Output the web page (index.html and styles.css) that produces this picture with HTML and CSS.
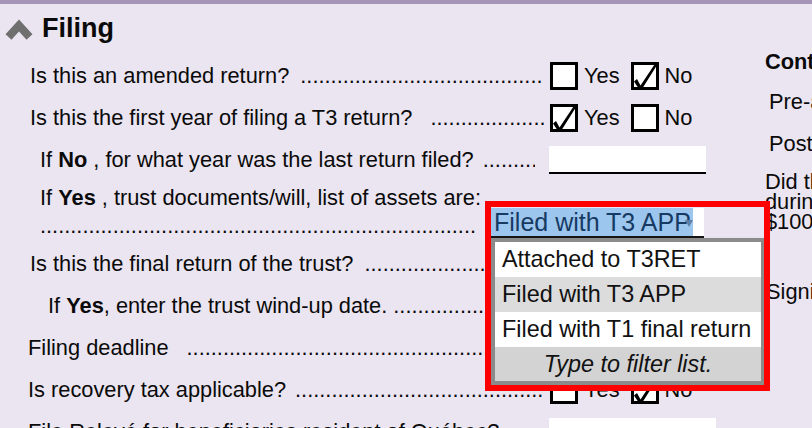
FILE: index.html
```html
<!DOCTYPE html>
<html lang="en">
<head>
<meta charset="utf-8">
<title>Filing</title>
<link rel="stylesheet" href="styles.css">
</head>
<body>
<div class="screen">
  <div class="topbar"></div>
  <div class="page">
    <section class="form">
      <h2 class="section-head">
        <svg class="chev" viewBox="0 0 30 24" width="30" height="24"><polyline points="4.5,21 15,9.5 25.5,21"/></svg>
        <span>Filing</span>
      </h2>

      <div class="row">
        <div class="q"><span class="label">Is this an amended return?</span><span class="lead gap-m"></span></div>
        <div class="ctl">
          <span class="cb"></span><span class="opt">Yes</span>
          <span class="cb"><svg class="tick" viewBox="0 0 28 28"><polygon points="3,19.5 6,17 9.5,23.5 23.5,2.5 25.8,3.5 10.5,27.8 8.5,27.8"/></svg></span><span class="opt">No</span>
        </div>
      </div>

      <div class="row">
        <div class="q"><span class="label">Is this the first year of filing a T3 return?</span><span class="lead gap-l"></span></div>
        <div class="ctl">
          <span class="cb"><svg class="tick" viewBox="0 0 28 28"><polygon points="3,19.5 6,17 9.5,23.5 23.5,2.5 25.8,3.5 10.5,27.8 8.5,27.8"/></svg></span><span class="opt">Yes</span>
          <span class="cb"></span><span class="opt">No</span>
        </div>
      </div>

      <div class="row">
        <div class="q q-sub q-short"><span class="label">If <b>No</b> , for what year was the last return filed?</span><span class="lead gap-s"></span></div>
        <div class="ctl"><span class="field"></span></div>
      </div>

      <div class="row row-tall">
        <div class="q q-sub q-stack">
          <span class="label">If <b>Yes</b> , trust documents/will, list of assets are:</span>
          <span class="lead"></span>
        </div>
        <div class="ctl"></div>
      </div>

      <div class="row">
        <div class="q"><span class="label">Is this the final return of the trust?</span><span class="lead gap-m"></span></div>
        <div class="ctl">
          <span class="cb"></span><span class="opt">Yes</span>
          <span class="cb"></span><span class="opt">No</span>
        </div>
      </div>

      <div class="row">
        <div class="q q-subsub"><span class="label">If <b>Yes</b>, enter the trust wind-up date.</span><span class="lead gap-xs"></span></div>
        <div class="ctl"><span class="field"></span></div>
      </div>

      <div class="row">
        <div class="q q-flush"><span class="label">Filing deadline</span><span class="lead gap-l"></span></div>
        <div class="ctl"><span class="field"></span></div>
      </div>

      <div class="row">
        <div class="q q-flush"><span class="label">Is recovery tax applicable?</span><span class="lead gap-s"></span></div>
        <div class="ctl">
          <span class="cb"></span><span class="opt">Yes</span>
          <span class="cb"><svg class="tick" viewBox="0 0 28 28"><polygon points="3,19.5 6,17 9.5,23.5 23.5,2.5 25.8,3.5 10.5,27.8 8.5,27.8"/></svg></span><span class="opt">No</span>
        </div>
      </div>

      <div class="row">
        <div class="q q-flush"><span class="label">File Relevé for beneficiaries resident of Québec?</span></div>
        <div class="ctl"><span class="field field-wide"></span></div>
      </div>
    </section>

    <aside class="side">
      <div class="side-title">Contact person</div>
      <div class="side-item">Pre-assessment review</div>
      <div class="side-item side-item-2">Post-assessment review</div>
      <div class="side-para">Did the trust hold foreign property<br>during the year with a total cost of more than<br>$100,000?</div>
      <div class="side-item side-sign">Signing authority</div>
    </aside>
  </div>

  <div class="dropdown">
    <div class="dd-field">
      <span class="dd-value">Filed with T3 APP</span>
      <span class="dd-arrow"></span>
    </div>
    <ul class="dd-list">
      <li class="dd-item">Attached to T3RET</li>
      <li class="dd-item dd-item-active">Filed with T3 APP</li>
      <li class="dd-item">Filed with T1 final return</li>
      <li class="dd-item dd-hint">Type to filter list.</li>
    </ul>
  </div>
  <div class="highlight"></div>
</div>
</body>
</html>
```

FILE: styles.css
```css
* { box-sizing: border-box; }

html, body {
  margin: 0;
  padding: 0;
}

body {
  width: 812px;
  height: 428px;
  overflow: hidden;
  background: #eae5f0;
  font-family: "Liberation Sans", Arial, sans-serif;
  font-size: 21.8px;
  color: #0a0a0a;
}

.screen {
  position: relative;
  width: 812px;
  height: 428px;
  overflow: hidden;
}

.topbar {
  height: 4px;
  background: #a795b9;
}

.page {
  display: flex;
}

.form {
  flex: 0 0 765px;
}

.section-head {
  display: flex;
  align-items: center;
  height: 51px;
  margin: 0;
  padding: 0 0 3px 4px;
  font-size: 27px;
  font-weight: bold;
}

.chev {
  margin-right: 8px;
  flex: none;
}

.chev polyline {
  fill: none;
  stroke: #6f6f6f;
  stroke-width: 8;
}

.row {
  display: grid;
  grid-template-columns: 544px 221px;
  align-items: center;
  height: 42px;
}

.row-tall {
  height: 62px;
  align-items: start;
  padding-top: 3px;
}

.q {
  display: flex;
  padding-left: 30px;
  line-height: 28px;
  white-space: nowrap;
  overflow: hidden;
}

.q-sub { padding-left: 40px; }
.q-subsub { padding-left: 48px; }
.q-flush { padding-left: 28px; }
.q-short { padding-right: 9px; }

.q-stack {
  flex-direction: column;
  padding-right: 69px;
  overflow: visible;
}

.label { flex: none; }

.lead {
  flex: 1;
  min-width: 0;
  overflow: hidden;
}

.lead::after {
  content: "....................................................................................................";
}

.gap-xs { margin-left: 6px; }
.gap-s { margin-left: 9px; }
.gap-m { margin-left: 11px; }
.gap-l { margin-left: 18px; }

.ctl {
  display: flex;
  align-items: center;
  padding-left: 6px;
  height: 28px;
}

.cb {
  position: relative;
  flex: none;
  width: 28px;
  height: 28px;
  border: 3px solid #000;
  background: #fff;
}

.tick {
  position: absolute;
  left: -3px;
  top: -3px;
  width: 28px;
  height: 28px;
  fill: #000;
}

.opt {
  margin-left: 6px;
  margin-right: 11px;
  line-height: 28px;
}

.cb + .opt + .cb + .opt { margin-right: 0; }

.field {
  display: block;
  width: 157px;
  height: 28px;
  margin-left: -1px;
  background: #fff;
  border-bottom: 2px solid #000;
}

.field-wide {
  width: 167px;
  border-bottom: none;
}

/* right column */
.side {
  flex: 0 0 320px;
  white-space: nowrap;
  line-height: 28px;
}

.side-title {
  margin-top: 44px;
  font-weight: bold;
}

.side-item {
  margin-top: 12px;
  padding-left: 4px;
}

.side-item-2 { margin-top: 14px; }

.side-para {
  margin-top: 14px;
  line-height: 20px;
}

.side-sign { margin-top: 46px; padding-left: 1px; }

/* open dropdown */
.dropdown {
  position: absolute;
  left: 491px;
  top: 208px;
  width: 274px;
}

.dd-field {
  position: relative;
  width: 213px;
  height: 30px;
  background: #fff;
  border-bottom: 2px solid #151515;
}

.dd-value {
  display: block;
  width: 202px;
  height: 28px;
  padding-left: 3px;
  background: #9dc6ee;
  color: #173a63;
  font-size: 25px;
  line-height: 28px;
  white-space: nowrap;
  overflow: hidden;
}

.dd-arrow {
  position: absolute;
  left: 194px;
  top: 12px;
  width: 0;
  height: 0;
  border-left: 4px solid transparent;
  border-right: 4px solid transparent;
  border-top: 7px solid #5f80a8;
}

.dd-list {
  list-style: none;
  margin: 0;
  padding: 0;
  width: 274px;
  border: 4px solid #8b8b8b;
  box-shadow: 2px 2px 3px rgba(0, 0, 0, 0.35);
}

.dd-item {
  height: 35px;
  padding-left: 7px;
  background: #fff;
  font-size: 23.4px;
  line-height: 35px;
  color: #111;
  white-space: nowrap;
}

.dd-item-active { background: #dcdcdc; }

.dd-hint {
  height: 34px;
  line-height: 34px;
  padding-left: 0;
  text-align: center;
  font-style: italic;
  background: #d3d3d3;
}

.highlight {
  position: absolute;
  left: 485px;
  top: 201px;
  width: 285px;
  height: 190px;
  border: 6px solid #ff0000;
}
```
